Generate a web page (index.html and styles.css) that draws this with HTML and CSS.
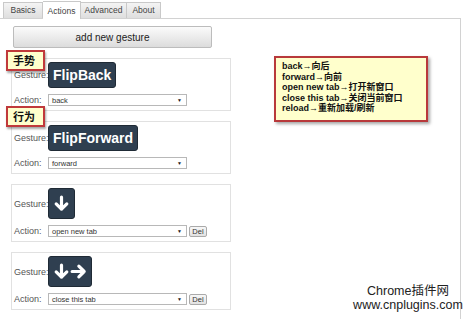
FILE: index.html
```html
<!DOCTYPE html>
<html lang="zh-CN">
  <head>
    <meta charset="UTF-8" />
    <title>Gestures - Actions</title>
    <link rel="stylesheet" href="styles.css">
  </head>
  <body>
    <div class="tabs">
      <div class="tab tab-basics">Basics</div>
      <div class="tab tab-actions active">Actions</div>
      <div class="tab tab-advanced">Advanced</div>
      <div class="tab tab-about">About</div>
    </div>

    <div class="panel">
      <button class="add-btn" type="button">add new gesture</button>

      <div class="gesture">
        <div class="row gesture-row">
          <span class="label">Gesture:</span>
          <span class="pad pad-text">FlipBack</span>
        </div>
        <div class="row action-row">
          <span class="label">Action:</span>
          <div class="select"><span>back</span><i>▼</i></div>
        </div>
      </div>

      <div class="gesture">
        <div class="row gesture-row">
          <span class="label">Gesture:</span>
          <span class="pad pad-text">FlipForward</span>
        </div>
        <div class="row action-row">
          <span class="label">Action:</span>
          <div class="select"><span>forward</span><i>▼</i></div>
        </div>
      </div>

      <div class="gesture">
        <div class="row gesture-row tall">
          <span class="label">Gesture:</span>
          <span class="pad pad-icon">
            <svg width="17" height="17" viewBox="0 0 24 24"><path d="M12 3V20M4.5 12.5L12 20l7.5-7.5" /></svg>
          </span>
        </div>
        <div class="row action-row">
          <span class="label">Action:</span>
          <div class="select"><span>open new tab</span><i>▼</i></div>
          <button class="del" type="button">Del</button>
        </div>
      </div>

      <div class="gesture">
        <div class="row gesture-row tall">
          <span class="label">Gesture:</span>
          <span class="pad pad-icon">
            <svg width="17" height="17" viewBox="0 0 24 24"><path d="M12 3V20M4.5 12.5L12 20l7.5-7.5" /></svg>
            <svg width="17" height="17" viewBox="0 0 24 24"><path d="M3 12H20M12.5 4.5L20 12l-7.5 7.5" /></svg>
          </span>
        </div>
        <div class="row action-row">
          <span class="label">Action:</span>
          <div class="select"><span>close this tab</span><i>▼</i></div>
          <button class="del" type="button">Del</button>
        </div>
      </div>
    </div>

    <!-- annotations laid over the screenshot -->
    <div class="tag tag-gesture">手势</div>
    <div class="tag tag-action">行为</div>

    <div class="note">
      <div>back→向后</div>
      <div>forward→向前</div>
      <div>open new tab→打开新窗口</div>
      <div>close this tab→关闭当前窗口</div>
      <div>reload→重新加载/刷新</div>
    </div>

    <div class="watermark">
      <div>Chrome插件网</div>
      <div>www.cnplugins.com</div>
    </div>
  </body>
</html>
```

FILE: styles.css
```css
body {
  margin: 0;
  width: 469px;
  height: 319px;
  overflow: hidden;
  position: relative;
  background: #fff;
  font-family: "Liberation Sans", Arial, "Noto Sans CJK SC", sans-serif;
  color: #333;
}

.tabs {
  display: flex;
  align-items: flex-end;
  height: 18px;
  padding-left: 3px;
}

.tab {
  box-sizing: border-box;
  height: 16px;
  line-height: 15px;
  font-size: 8.5px;
  text-align: center;
  color: #444;
  border: 1px solid #c9c9c9;
  border-bottom: none;
  border-left: none;
  background: linear-gradient(#f4f4f4, #dedede);
}

.tab-basics {
  width: 40px;
  border-left: 1px solid #c9c9c9;
}

.tab-actions {
  width: 38px;
}

.tab-advanced {
  width: 46px;
}

.tab-about {
  width: 34px;
}

.tab.active {
  height: 18px;
  line-height: 18px;
  margin-bottom: -1px;
  background: #fff;
  position: relative;
  z-index: 1;
}

.panel {
  box-sizing: border-box;
  width: 461px;
  height: 301px;
  border-top: 1px solid #d2d2d2;
  border-right: 1px solid #d2d2d2;
  padding: 7px 0 0 11px;
}

.add-btn {
  display: block;
  box-sizing: border-box;
  width: 199px;
  height: 22px;
  margin: 0 0 10px 2px;
  padding: 0;
  font-family: "Liberation Sans", Arial, sans-serif;
  font-size: 10px;
  color: #222;
  border: 1px solid #bcbcbc;
  border-radius: 2px;
  background: linear-gradient(#fbfbfb, #dcdcdc);
}

.gesture {
  box-sizing: border-box;
  width: 220px;
  margin-bottom: 10px;
  padding: 3px 0 2px 2px;
  border: 1px solid #e1e1e1;
}

.row {
  display: flex;
  align-items: center;
}

.gesture-row {
  height: 26px;
}

.gesture-row.tall {
  height: 31px;
}

.action-row {
  height: 16px;
  margin-top: 4px;
}

.label {
  width: 34px;
  flex: none;
  font-size: 9px;
  color: #555;
  white-space: nowrap;
}

.pad {
  box-sizing: border-box;
  height: 100%;
  display: flex;
  align-items: center;
  justify-content: center;
  background: #2f3f50;
  border: 1px solid #1f2a35;
  border-radius: 3px;
}

.pad-text {
  padding: 0 4px;
  font-size: 14px;
  font-weight: bold;
  color: #fff;
}

.pad-icon {
  padding: 0 4px;
}

.pad-icon svg path {
  fill: none;
  stroke: #fff;
  stroke-width: 4.5;
  stroke-linecap: round;
  stroke-linejoin: round;
}

.select {
  box-sizing: border-box;
  width: 139px;
  height: 12px;
  display: flex;
  align-items: center;
  justify-content: space-between;
  padding: 0 4px 0 3px;
  border: 1px solid #b8b8b8;
  background: #fff;
  font-size: 7.5px;
  color: #333;
}

.select i {
  font-style: normal;
  font-size: 5px;
  color: #222;
}

.del {
  box-sizing: border-box;
  width: 18px;
  height: 11px;
  margin-left: 2px;
  padding: 0;
  font-family: "Liberation Sans", Arial, sans-serif;
  font-size: 7.5px;
  color: #333;
  border: 1px solid #aaa;
  border-radius: 2px;
  background: linear-gradient(#f7f7f7, #e2e2e2);
}

.tag {
  position: absolute;
  left: 6px;
  box-sizing: border-box;
  width: 39px;
  height: 21px;
  line-height: 17px;
  padding-left: 5px;
  font-family: "Noto Sans CJK SC", sans-serif;
  font-size: 11px;
  font-weight: bold;
  color: #111;
  background: #ffffcc;
  border: 2px solid #c0393b;
  box-shadow: 1px 2px 2px rgba(0, 0, 0, 0.35);
  z-index: 2;
}

.tag-gesture {
  top: 50px;
}

.tag-action {
  top: 106px;
}

.note {
  position: absolute;
  left: 274px;
  top: 56px;
  box-sizing: border-box;
  width: 154px;
  height: 66px;
  padding: 3px 0 0 6px;
  font-family: "Liberation Sans", Arial, "Noto Sans CJK SC", sans-serif;
  font-size: 9px;
  line-height: 10.5px;
  font-weight: bold;
  color: #111;
  background: #ffffcc;
  border: 2px solid #b8393b;
  box-shadow: 2px 2px 3px rgba(0, 0, 0, 0.35);
}

.watermark {
  position: absolute;
  left: 348px;
  top: 284px;
  width: 120px;
  text-align: center;
  font-family: "Liberation Sans", Arial, "Noto Sans CJK SC", sans-serif;
  font-size: 12.5px;
  line-height: 14px;
  color: #222;
}
```
